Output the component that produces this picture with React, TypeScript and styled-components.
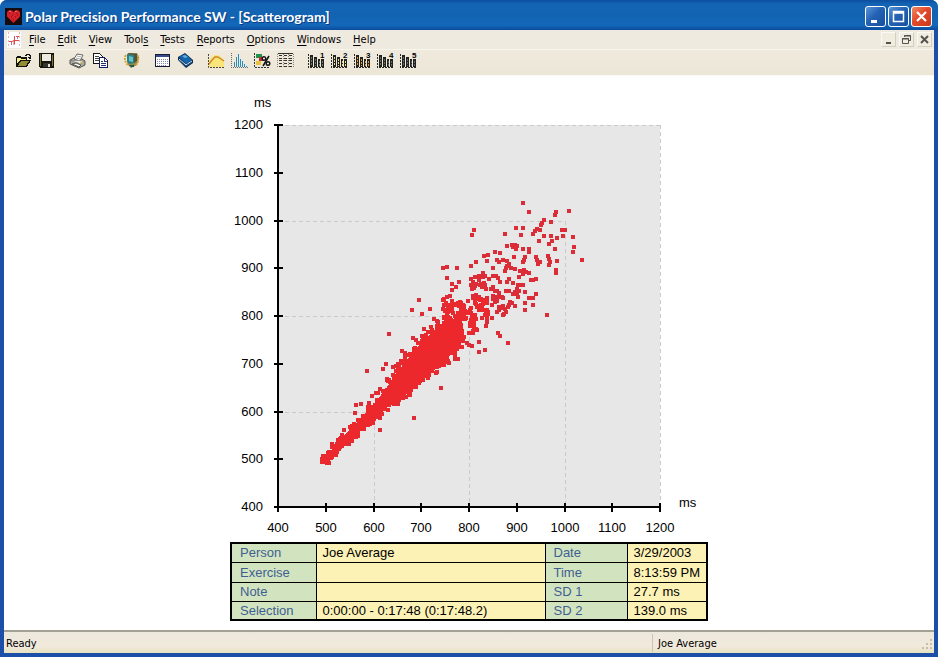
import React from "react";
import styled, { createGlobalStyle } from "styled-components";

const GlobalStyle = createGlobalStyle`
  *, *::before, *::after { box-sizing: border-box; }
  body { margin: 0; background: #fff; }
`;

const uiFont = `"DejaVu Sans Condensed", "DejaVu Sans", sans-serif`;
const chartFont = `"Liberation Sans", Arial, sans-serif`;

const Window = styled.div`
  display: flex;
  flex-direction: column;
  min-height: 100vh;
  background: #1c50a8;
  border-radius: 7px 7px 0 0;
  overflow: hidden;
  font: 11px/14px ${uiFont};
  color: #000;
`;

const TitleBar = styled.header`
  display: flex;
  align-items: center;
  gap: 3px;
  height: 30px;
  padding: 3px 6px 0 5px;
  background: linear-gradient(#0c4ea0 0, #1464b4 4px, #1264b2 16px, #1468ba 25px, #0b4c9e 30px);
`;

const Title = styled.h1`
  flex: 1;
  margin: 0;
  color: #fff;
  font: bold 14px/18px Lato, "Noto Sans", sans-serif;
  text-shadow: 1px 1px 0 #0b3c86;
  white-space: nowrap;
`;

const CaptionButtons = styled.div`
  display: flex;
  gap: 2px;
`;

const CaptionButton = styled.button<{ $danger?: boolean }>`
  display: grid;
  place-items: center;
  width: 21px;
  height: 21px;
  padding: 0;
  border: 1px solid #fff;
  border-radius: 3px;
  background: ${(p) =>
    p.$danger
      ? "linear-gradient(135deg, #ee8c68, #e2492a 45%, #c8391c)"
      : "linear-gradient(135deg, #5a94da, #2462b4 45%, #174f9e)"};
`;

const Body = styled.div`
  display: flex;
  flex: 1;
  flex-direction: column;
  margin: 0 4px 4px;
  background: #fff;
`;

const MenuBar = styled.nav`
  display: flex;
  align-items: center;
  height: 19px;
  padding: 0 2px 0 3px;
  background: #efeadf;
`;

const MenuList = styled.div`
  display: flex;
  gap: 12px;
  margin-left: 7px;
`;

const MenuButton = styled.button`
  padding: 0;
  border: 0;
  background: none;
  color: #000;
  font: 11px/14px ${uiFont};
  white-space: nowrap;
  u { text-underline-offset: 2px; }
`;

const MdiButtons = styled.div`
  display: flex;
  gap: 3px;
  margin-left: auto;
`;

const MdiButton = styled.button`
  display: grid;
  place-items: center;
  width: 15px;
  height: 15px;
  padding: 0;
  border: 1px solid;
  border-color: #fbf9f3 #d3cebd #d3cebd #fbf9f3;
  background: #f0ecdf;
`;

const ToolBar = styled.div`
  display: flex;
  gap: 8px;
  height: 26px;
  padding: 0 8px 4px;
  border-top: 1px solid #f8f5ec;
  background: linear-gradient(#efeadd, #ece6d7);
`;

const ToolGroup = styled.div`
  display: flex;
`;

const ToolButton = styled.button`
  display: grid;
  place-items: center;
  width: 23px;
  height: 21px;
  padding: 0;
  border: 0;
  background: none;
`;

const Content = styled.main`
  display: flex;
  flex: 1;
  flex-direction: column;
  align-items: center;
  padding: 14px 16px 8px;
  border-top: 1px solid #fbfaf6;
  background: #fff;
`;

const Chart = styled.svg`
  display: block;
  width: 476px;
  max-width: 100%;
  height: auto;
  font: 13px ${chartFont};
`;

const Info = styled.table`
  width: 476px;
  max-width: 100%;
  border: 2px solid #000;
  border-collapse: collapse;
  table-layout: fixed;
  font: 13px/15px ${chartFont};
`;

const InfoRow = styled.tr`
  height: 19px;
  &:nth-child(2) { height: 20px; }
`;

const Label = styled.th`
  padding: 1px 0 1px 8px;
  border: 1px solid #000;
  background: #d2e4bf;
  color: #3f5f92;
  font-weight: normal;
  text-align: left;
  white-space: nowrap;
`;

const Value = styled.td`
  padding: 1px 0 1px 6px;
  border: 1px solid #000;
  background: #fdf2b6;
  white-space: nowrap;
`;

const StatusBar = styled.footer`
  display: flex;
  align-items: center;
  height: 23px;
  border-top: 2px solid #a3a096;
  background: linear-gradient(#ece9dc, #f1e9dc 70%, #e6e2c0);
`;

const StatusText = styled.span`
  flex: 1;
  padding: 2px 0 0 2px;
`;

const StatusUser = styled.span`
  display: flex;
  justify-content: space-between;
  align-items: center;
  width: 282px;
  height: 18px;
  padding: 2px 1px 0 5px;
  border-left: 1px solid #c9c4b4;
`;

/* ---------- icons ---------- */

const Svg = ({ children }: { children: React.ReactNode }) => (
  <svg width="17" height="17" viewBox="0 0 17 17" aria-hidden="true" shapeRendering="crispEdges">
    {children}
  </svg>
);

const HeartIcon = () => (
  <svg width="17" height="17" viewBox="0 0 17 17" aria-hidden="true">
    <path d="M0 0h17v17H0z" fill="#160c10" />
    <path d="M8.5 15 2 8.5V4l2.5-2L7 2.5 8.5 4 10 2.5l2.500-.5L15 4v4.500z" fill="#d42028" />
    <path d="M4 5h1m2 2h1m3-2h1m-6 4h1m3 0h1m-3 3h1m3-5h1" stroke="#7c0c18" />
    <path d="M4 3.500h2m4 0h2" stroke="#f46a60" />
  </svg>
);

const DocIcon = () => (
  <svg width="15" height="16" viewBox="0 0 15 16" aria-hidden="true">
    <path d="M0 0h14v16H0z" fill="#fff" />
    <path d="M1.500 0v16M12.500 0v16" stroke="#f3b4b0" strokeDasharray="2 2" />
    <path d="M2 9.500h3l2-1V13M7.500 4v8M7.500 8.500H12M9 4.500h3" stroke="#e5484c" fill="none" />
    <path d="M4.500 10v3M10.500 5v2" stroke="#8a86b8" />
  </svg>
);

const OpenIcon = () => (
  <Svg>
    <path d="M1 15V5h1V4h4v1h6v3h4L12 15z" fill="#111" />
    <path d="M2 6h4v1h5v1H5L2 12z" fill="#f5ee8b" />
    <path d="M6 9h8l-3 5H3z" fill="#928c32" />
    <path d="M10 3h1V2h3v1h1v2M13 5h3M14 6h2" stroke="#111" fill="none" />
  </Svg>
);
const SaveIcon = () => (
  <Svg>
    <path d="M1 1h15v15H2l-1-1z" fill="#16160f" />
    <path d="M2 2h1v12H2zM14 3h1v11h-1z" fill="#77742e" />
    <path d="M4 2h9v7H4z" fill="#eeece0" />
    <path d="M5 11h7v4H5z" fill="#34342c" />
    <path d="M10 12h2v3h-2z" fill="#e6e4da" />
  </Svg>
);
const PrintIcon = () => (
  <svg width="17" height="17" viewBox="0 0 17 17" aria-hidden="true">
    <path d="m1 8 4-2 8 1 3 2v4l-6 3-9-4z" fill="#aaa9a2" stroke="#55544e" />
    <path d="m5 7 3-5 6 1-3 6z" fill="#fff" stroke="#66655e" />
    <path d="m8 4 4 1M7 6l4 1" stroke="#aaa" />
    <path d="m1.500 8.500 9 3 5-2-5-1z" fill="#ecebe6" stroke="#77766e" strokeWidth=".6" />
    <path d="m10 12 4-2" stroke="#d5c24c" />
    <path d="m3 12 4-1 5 2-2 2z" fill="#f7f6f2" stroke="#55544e" />
  </svg>
);
const CopyIcon = () => (
  <Svg>
    <path d="M1.500 1.500h6l3 3v7h-9z" fill="#fff" stroke="#161616" />
    <path d="M3 4.500h4M3 6.500h5M3 8.500h5" stroke="#424242" />
    <path d="M7.500 5.500h5l3 3v7h-8z" fill="#fff" stroke="#141c60" />
    <path d="M12.500 6v3H15M9 9.500h2M9 11.500h5M9 13.500h5" stroke="#27305f" fill="none" />
  </Svg>
);
const TransferIcon = () => (
  <svg width="17" height="17" viewBox="0 0 17 17" aria-hidden="true">
    <path d="M5 1h9l2 4-2 8-6 3-4-4z" fill="#948846" />
    <path d="M3 3q-3 5 2 10M14 3q3 5-1 10" stroke="#d8a434" fill="none" strokeWidth="2" strokeDasharray="2 1" />
    <path d="m4 2 7 1v8l-5 1-2-3z" fill="#2a8084" />
    <path d="m6 4 4 1v5l-4-1z" fill="#63c5ca" />
    <path d="m4 2 3-1 7 1-3 1zM11 3v8l3-2V2z" fill="#525345" />
    <path d="M6 13h5v2H8z" fill="#27564e" />
  </svg>
);
const CalendarIcon = () => (
  <Svg>
    <path d="M1.500 2.500h14v12h-14z" fill="#fff" stroke="#181c38" />
    <path d="M2 3h13v2H2z" fill="#354b8b" />
    <path d="M3 7.500h11M3 9.500h11M3 11.500h11M3 13.500h9" stroke="#7e87ad" strokeDasharray="1 1" />
  </Svg>
);
const BookIcon = () => (
  <svg width="17" height="17" viewBox="0 0 17 17" aria-hidden="true">
    <path d="m1 5 7-4 8 7v3l-7 5-8-8z" fill="#10284a" />
    <path d="m2 5 6-3 7 6-6 4z" fill="#1467ae" />
    <path d="m5 4 3-1 3 2-3 1z" fill="#60b1df" />
    <path d="m2 7 7 6 6-4" stroke="#e8edf0" fill="none" />
    <path d="m2 8 7 6 6-4" stroke="#176199" fill="none" />
  </svg>
);
const CurveIcon = () => (
  <svg width="17" height="17" viewBox="0 0 17 17" aria-hidden="true">
    <path d="M1 15V8l2-2 3-3h4l3 2 3 3v7z" fill="#fae57c" />
    <path d="M1 12 4 8l3-3h3l3 2 3 2" stroke="#cc8b24" fill="none" strokeWidth="1.500" />
    <path d="M.5 2v13.500H17" stroke="#504a34" fill="none" strokeDasharray="2 1" />
  </svg>
);
const HistogramIcon = () => (
  <Svg>
    <path d="M.5 1v14.500H17" stroke="#676a67" fill="none" strokeDasharray="1 1" />
    <path d="M3.500 15v-5M5.500 15V5M7.500 15V2M9.500 15V7M11.500 15V9M13.500 15v-3M15.500 15v-1" stroke="#278fbd" />
  </Svg>
);
const PercentIcon = () => (
  <svg width="17" height="17" viewBox="0 0 17 17" aria-hidden="true">
    <path d="M.5 1v14.500H15" stroke="#333" fill="none" strokeDasharray="2 1" />
    <path d="M2 2h6v4H2z" fill="#1f914a" />
    <path d="M5 5h4v4H5z" fill="#c72932" />
    <path d="M2 9h5v4H2z" fill="#e8c33c" />
    <path d="m9 14 6-10" stroke="#111" strokeWidth="1.500" />
    <circle cx="10" cy="6.500" r="1.800" fill="none" stroke="#111" strokeWidth="1.400" />
    <circle cx="14" cy="11.500" r="1.800" fill="none" stroke="#111" strokeWidth="1.400" />
  </svg>
);
const ListIcon = () => (
  <Svg>
    <path d="M1 1.500h15" stroke="#32312d" />
    <path
      d="M2 3.500h3M7 3.500h3M12 3.500h3M2 6.500h3M7 6.500h3M12 6.500h3M2 8.500h3M7 8.500h3M12 8.500h3M2 11.500h3M7 11.500h3M12 11.500h3M2 14.500h3M7 14.500h3M12 14.500h3"
      stroke="#32312d"
    />
    <path d="M.5 2v14M6 2v14M11 2v14M16 2v14" stroke="#8b877b" strokeDasharray="1 1" />
  </Svg>
);

const ReportGlyph = styled.text`
  font: bold 8px ${chartFont};
`;

const ReportIcon = ({ n, fill }: { n: number; fill: string }) => (
  <Svg>
    <path d="M.5 2v13.500H16" stroke="#2a2a26" fill="none" strokeDasharray="2 1" />
    <path d="M2 3h3v12H2zM6 5h3v10H6zM10 7h2v8h-2zM13 7h3v8h-3z" fill="#22231f" />
    <path d="M3.500 5v9M7.500 7v7M11.500 9v5M14.500 9v5" stroke={fill} strokeDasharray="2 1" />
    <ReportGlyph x="12" y="6">{n}</ReportGlyph>
  </Svg>
);

/* ---------- data ---------- */

const menus: [string, string, string][] = [
  ["", "F", "ile"],
  ["", "E", "dit"],
  ["", "V", "iew"],
  ["Tool", "s", ""],
  ["", "T", "ests"],
  ["", "R", "eports"],
  ["", "O", "ptions"],
  ["", "W", "indows"],
  ["", "H", "elp"],
];

const tools: { name: string; icon: React.ReactNode }[][] = [
  [{ name: "Open", icon: <OpenIcon /> }, { name: "Save", icon: <SaveIcon /> }],
  [{ name: "Print", icon: <PrintIcon /> }, { name: "Copy", icon: <CopyIcon /> }],
  [{ name: "Transfer", icon: <TransferIcon /> }],
  [{ name: "Calendar", icon: <CalendarIcon /> }, { name: "Diary", icon: <BookIcon /> }],
  [
    { name: "Curve", icon: <CurveIcon /> },
    { name: "Distribution", icon: <HistogramIcon /> },
    { name: "Zones", icon: <PercentIcon /> },
    { name: "Laps", icon: <ListIcon /> },
  ],
  ["#6f7a72", "#ece08c", "#e09a3c", "#6a6d60", "#5d6670"].map((fill, i) => ({
    name: `Report ${i + 1}`,
    icon: <ReportIcon n={i + 1} fill={fill} />,
  })),
];

type Point = [number, number];

/* RR interval pairs outside the dense trend, in chart units */
const isolated: Point[] = [
  [523,203],[529,212],[569,211],[556,212],[555,215],[551,222],[544,220],[542,223],[541,225],[474,230],[472,235],[505,234],[516,228],[523,228],[521,235],
  [537,229],[540,230],[535,231],[533,234],[562,230],[565,230],[563,236],[544,236],[551,236],[557,238],[573,237],[539,241],[552,241],[549,244],[574,247],
  [573,252],[582,260],[555,249],[507,246],[512,245],[515,245],[517,246],[513,247],[516,249],[523,249],[529,249],[529,252],[495,252],[500,253],[488,255],
  [484,256],[487,261],[476,262],[471,266],[493,268],[514,257],[525,257],[524,260],[523,262],[497,260],[499,262],[503,260],[507,261],[509,264],[507,266],
  [506,268],[505,271],[511,268],[515,269],[536,257],[537,260],[540,262],[538,264],[548,256],[549,259],[550,262],[549,265],[557,261],[556,270],[556,273],
  [443,268],[447,267],[457,268],[447,278],[452,284],[459,282],[456,287],[452,290],[483,273],[519,277],[520,271],[524,270],[526,272],[529,273],[523,274],
  [531,280],[536,279],[533,280],[509,279],[507,282],[513,283],[493,276],[496,276],[498,278],[500,282],[475,277],[471,279],[478,277],[479,280],[473,282],
  [471,285],[475,286],[472,289],[476,284],[481,284],[483,277],[484,283],[485,285],[482,287],[486,289],[489,279],[479,276],[485,276],[518,285],[521,285],
  [523,285],[493,287],[491,289],[497,291],[495,291],[499,293],[506,291],[509,291],[517,289],[519,291],[515,292],[525,292],[513,294],[517,294],[518,297],
  [536,294],[529,298],[533,298],[525,303],[533,305],[525,310],[493,296],[497,297],[495,302],[493,299],[501,297],[503,298],[509,305],[512,303],[515,306],
  [508,307],[547,315],[499,307],[502,308],[505,309],[504,314],[506,312],[473,296],[477,297],[487,298],[484,300],[483,303],[468,301],[492,305],
  [419,300],[412,310],[422,314],[430,309],[498,333],[500,336],[508,343],[479,342],[479,352],[485,350],[472,346],
  [469,345],[467,343],[449,363],[455,359],[458,359],[436,373],[441,388],[424,329],[422,336],[413,338],[402,351],[405,353],[434,319],[437,321],[443,300],
  [447,297],[450,296],[444,305],[443,309],[452,301],[458,303],[463,305],[468,301],[473,298],[479,297],[476,295],[482,305],[481,310],[488,312],[492,318],
  [486,314],[487,322],[486,326],[477,330],[473,333],[482,318],[497,312],[503,315],[495,297],[497,301],[502,297],[510,302],[503,306],[499,310],[474,288],
  [480,285],[483,286],[367,371],[383,369],[386,364],[393,367],[398,364],[405,360],[387,380],[380,389],[376,393],[372,396],[356,405],[361,404],[369,403],
  [355,413],[414,418],[389,334],[398,404],[380,430],[380,418],[373,421],[344,430],[342,435],[338,440],[332,444],[349,444],[363,428],[406,397],
  [420,381],[405,355],[416,340],[438,322],[387,379],[396,366],[401,361],
];

/* outline of the dense part of the trend */
const upperEdge: Point[] = [[325,457],[340,440],[358,421],[375,403],[390,383],[400,369],[410,356],[420,344],[430,334],[440,326],[448,318],[462,320]];
const lowerEdge: Point[] = [[464,332],[458,347],[450,355],[440,365],[425,378],[412,389],[400,399],[388,407],[375,418],[358,433],[342,446],[328,461]];
const core = [...upperEdge, ...lowerEdge];

let seed = 77;
const random = () => {
  seed = (seed * 16807) % 2147483647;
  return seed / 2147483647;
};

function fringe(): Point[] {
  const points: Point[] = [];
  [upperEdge, lowerEdge].forEach((edge) => {
    for (let i = 1; i < edge.length; i++) {
      const [ax, ay] = edge[i - 1];
      const [bx, by] = edge[i];
      const spread = ax < 350 ? 3 : ax < 385 ? 5 : 7;
      for (let k = 0; k < 10; k++) {
        const t = random();
        points.push([
          ax + (bx - ax) * t + (random() - 0.5) * spread,
          ay + (by - ay) * t + (random() - 0.5) * spread,
        ]);
      }
    }
  });
  for (let i = 0; i < 22; i++) points.push([322 + random() * 7, 456 + random() * 7]);
  for (let i = 0; i < 115; i++) {
    const x = 443 + random() * 45;
    points.push([x, 299 + random() * Math.min(40, 508 - x)]);
  }
  return points;
}

const squares = (points: Point[]) =>
  points.map(([x, y]) => `M${Math.round(x) - 2} ${Math.round(y) - 2}h4v4h-4z`).join("");

const isolatedPath = squares(isolated);
const fringePath = squares(fringe());
const scale = [400, 500, 600, 700, 800, 900, 1000, 1100, 1200];
const toX = (v: number) => Math.round(278 + ((v - 400) * 382) / 800);
const toY = (v: number) => Math.round(507 - ((v - 400) * 382) / 800);

function Scatterogram() {
  return (
    <Chart viewBox="231 90 476 452" role="img" aria-label="Scatterogram of RR intervals in milliseconds">
      <g shapeRendering="crispEdges">
        <path d="M278 125h382v382H278z" fill="#e7e7e7" />
        {[600, 800, 1000, 1200].map((v) => (
          <path
            key={v}
            d={`M${toX(v)} ${toY(v)}V507M278 ${toY(v)}H${toX(v)}`}
            fill="none"
            stroke="#cacaca"
            strokeDasharray="4 3"
          />
        ))}
        <path d={isolatedPath} fill="#dc2c38" />
        <path d={fringePath} fill="#ea292e" />
        <path d={`M${core.map((p) => p.join(" ")).join("L")}z`} fill="#ec282c" />
        <path d="M278 125V507H660" fill="none" stroke="#000" strokeWidth="2" />
        {scale.map((v) => (
          <path
            key={v}
            d={`M274 ${toY(v)}h9M${toX(v)} 503v9`}
            stroke="#000"
            strokeWidth="2"
          />
        ))}
      </g>
      <text x="254" y="107">ms</text>
      <text x="679" y="507">ms</text>
      {scale.map((v) => (
        <g key={v}>
          <text x="263" y={toY(v) + 4} textAnchor="end">{v}</text>
          <text x={toX(v)} y="532" textAnchor="middle">{v}</text>
        </g>
      ))}
    </Chart>
  );
}

const rows = [
  ["Person", "Joe Average", "Date", "3/29/2003"],
  ["Exercise", "", "Time", "8:13:59 PM"],
  ["Note", "", "SD 1", "27.7 ms"],
  ["Selection", "0:00:00 - 0:17:48 (0:17:48.2)", "SD 2", "139.0 ms"],
];

export default function App() {
  return (
    <Window>
      <GlobalStyle />
      <TitleBar>
        <HeartIcon />
        <Title>Polar Precision Performance SW - [Scatterogram]</Title>
        <CaptionButtons>
          <CaptionButton aria-label="Minimize">
            <svg width="15" height="15"><path d="M3 11h6v3H3z" fill="#fff" /></svg>
          </CaptionButton>
          <CaptionButton aria-label="Maximize">
            <svg width="15" height="15"><path d="M2.500 2.500h10v10h-10zM2 4h11" fill="none" stroke="#fff" strokeWidth="1.500" /></svg>
          </CaptionButton>
          <CaptionButton $danger aria-label="Close">
            <svg width="15" height="15"><path d="m3 3 9 9m0-9-9 9" stroke="#fff" strokeWidth="2.200" /></svg>
          </CaptionButton>
        </CaptionButtons>
      </TitleBar>
      <Body>
        <MenuBar>
          <DocIcon />
          <MenuList>
            {menus.map(([before, key, after]) => (
              <MenuButton key={before + key + after}>
                {before}<u>{key}</u>{after}
              </MenuButton>
            ))}
          </MenuList>
          <MdiButtons>
            <MdiButton aria-label="Minimize document">
              <svg width="11" height="11"><path d="M3 8h5v2H3z" fill="#55534c" /></svg>
            </MdiButton>
            <MdiButton aria-label="Restore document">
              <svg width="11" height="11"><path d="M3.500 3V1.500h6v5H8M3 2h7M1.500 4.500h6v5h-6zM1 5h7" fill="none" stroke="#55534c" /></svg>
            </MdiButton>
            <MdiButton aria-label="Close document">
              <svg width="11" height="11"><path d="m2 2 7 7m0-7-7 7" stroke="#55534c" strokeWidth="2" /></svg>
            </MdiButton>
          </MdiButtons>
        </MenuBar>
        <ToolBar>
          {tools.map((group) => (
            <ToolGroup key={group[0].name}>
              {group.map((tool) => (
                <ToolButton key={tool.name} aria-label={tool.name}>{tool.icon}</ToolButton>
              ))}
            </ToolGroup>
          ))}
        </ToolBar>
        <Content>
          <Scatterogram />
          <Info>
            <colgroup>
              <col width="85" />
              <col width="229" />
              <col width="82" />
              <col width="80" />
            </colgroup>
            <tbody>
              {rows.map(([a, b, c, d]) => (
                <InfoRow key={a}>
                  <Label scope="row">{a}</Label>
                  <Value>{b}</Value>
                  <Label scope="row">{c}</Label>
                  <Value>{d}</Value>
                </InfoRow>
              ))}
            </tbody>
          </Info>
        </Content>
        <StatusBar>
          <StatusText>Ready</StatusText>
          <StatusUser>
            Joe Average
            <svg width="12" height="12" aria-hidden="true">
              <path d="M9 1h2v2H9zM5 5h2v2H5zM9 5h2v2H9zM1 9h2v2H1zM5 9h2v2H5zM9 9h2v2H9z" fill="#c8bda9" />
            </svg>
          </StatusUser>
        </StatusBar>
      </Body>
    </Window>
  );
}
